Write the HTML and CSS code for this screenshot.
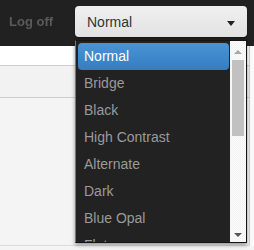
FILE: index.html
```html
<!DOCTYPE html>
<html lang="en">
<head>
    <meta charset="UTF-8">
    <title>Theme picker</title>
    <link rel="stylesheet" href="styles.css">
</head>
<body>
    <div class="topbar">
        <a class="logoff">Log off</a>
        <div class="picker">
            <div class="select">
                <span>Normal</span>
                <span class="arrow"></span>
            </div>
            <div class="list">
                <ul class="options">
                    <li class="selected">Normal</li>
                    <li>Bridge</li>
                    <li>Black</li>
                    <li>High Contrast</li>
                    <li>Alternate</li>
                    <li>Dark</li>
                    <li>Blue Opal</li>
                    <li>Flat</li>
                </ul>
                <div class="scrollbar">
                    <div class="btn up"></div>
                    <div class="thumb"></div>
                    <div class="track"></div>
                    <div class="btn down"></div>
                </div>
            </div>
        </div>
    </div>
    <div class="main">
        <div class="panel">
            <div class="strip"></div>
            <div class="toolbar"></div>
        </div>
        <div class="edge"></div>
    </div>
</body>
</html>
```

FILE: styles.css
```css
* {
    margin: 0;
    padding: 0;
    box-sizing: border-box;
}

body {
    width: 254px;
    height: 250px;
    overflow: hidden;
    font-family: "Liberation Sans", Arial, sans-serif;
    background: #f4f4f4;
}

.topbar {
    height: 46px;
    background: #212121;
    display: flex;
    align-items: flex-start;
    padding: 6px 0 0 9px;
    position: relative;
    z-index: 2;
}

.logoff {
    font-size: 13px;
    font-weight: bold;
    color: #5a5a5a;
    margin-top: 8px;
    width: 66px;
    filter: blur(0.7px);
}

.picker {
    position: relative;
}

.select {
    width: 172px;
    height: 31px;
    border-radius: 4px;
    background: linear-gradient(#f0f0f0, #e2e2e2);
    box-shadow: 0 1px 2px rgba(0, 0, 0, 0.4);
    display: flex;
    align-items: center;
    justify-content: space-between;
    padding: 0 12px 0 12px;
    font-size: 14px;
    color: #333;
}

.arrow {
    width: 0;
    height: 0;
    border-left: 4px solid transparent;
    border-right: 4px solid transparent;
    border-top: 5px solid #222;
    margin-top: 3px;
}

.list {
    position: absolute;
    left: 0;
    top: 34px;
    width: 172px;
    height: 203px;
    background: #222;
    border: 1px solid #151515;
    border-left-color: #777;
    box-shadow: 0 2px 4px rgba(0, 0, 0, 0.4);
    display: flex;
}

.options {
    list-style: none;
    flex: 1;
    overflow: hidden;
    padding: 2px 1px 0 2px;
}

.options li {
    height: 27px;
    line-height: 27px;
    padding-left: 6px;
    font-size: 14px;
    color: #9a9a9a;
    border-radius: 4px;
}

.options li.selected {
    color: #fff;
    background: linear-gradient(#4a94d6, #337dc0);
}

.scrollbar {
    width: 16px;
    display: flex;
    flex-direction: column;
    background: repeating-conic-gradient(#f2f2f2 0 25%, #fcfcfc 0 50%) 0 0 / 2px 2px;
}

.btn {
    height: 19px;
    display: flex;
    justify-content: center;
    align-items: center;
}

.btn::after {
    content: "";
    border-left: 4px solid transparent;
    border-right: 4px solid transparent;
}

.up::after {
    border-bottom: 4px solid #a8a8a8;
    margin-top: 2px;
}

.down::after {
    border-top: 4px solid #555;
    margin-top: 4px;
}

.thumb {
    height: 76px;
    margin: 0 2px;
    background: #c1c1c1;
}

.track {
    flex: 1;
}

.main {
    display: flex;
    height: 200px;
}

.panel {
    flex: 1;
    border-right: 1px solid #d6d6d6;
    border-bottom: 1px solid #dcdcdc;
    background: #f4f4f4;
}

.strip {
    height: 20px;
    background: #fff;
    border-bottom: 1px solid #cfcfcf;
}

.toolbar {
    height: 32px;
    background: #f2f2f2;
    border-bottom: 1px solid #cfcfcf;
}

.edge {
    width: 4px;
    background: #fafafa;
}
```
